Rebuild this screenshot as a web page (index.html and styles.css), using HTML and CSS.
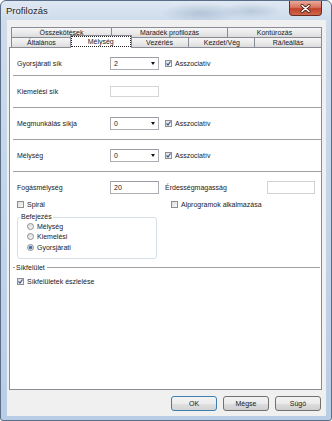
FILE: index.html
```html
<!DOCTYPE html>
<html lang="hu">

<head>
    <meta charset="UTF-8">
    <title>Profilozás</title>
    <link rel="stylesheet" href="styles.css">
</head>

<body>
    <div class="window">
        <!-- Címsor -->
        <div class="titlebar">
            <span class="title">Profilozás</span>
            <div class="close-button">
                <svg width="11" height="9" viewBox="0 0 11 9">
                    <path d="M2 1.5 L9 7.5 M9 1.5 L2 7.5" stroke="#4a1b14" stroke-width="3" stroke-linecap="round"/>
                    <path d="M2 1.5 L9 7.5 M9 1.5 L2 7.5" stroke="#fff" stroke-width="1.6" stroke-linecap="round"/>
                </svg>
            </div>
        </div>

        <div class="client">
            <!-- Fülek -->
            <div class="tabs">
                <div class="tab-row">
                    <div class="tab tab-osszekotesek">Összekötések</div>
                    <div class="tab tab-maradek">Maradék profilozás</div>
                    <div class="tab tab-konturozas">Kontúrozás</div>
                </div>
                <div class="tab-row">
                    <div class="tab tab-altalanos">Általános</div>
                    <div class="tab tab-melyseg active">Mélység</div>
                    <div class="tab tab-vezerles">Vezérlés</div>
                    <div class="tab tab-kezdet">Kezdet/Vég</div>
                    <div class="tab tab-raleallas">Rá/leállás</div>
                </div>
            </div>

            <div class="panel">
                <div class="row first">
                    <span class="label">Gyorsjárati sík</span>
                    <div class="combo"><span>2</span><span class="arrow"></span></div>
                    <div class="check"><span class="box checked"></span>Asszociatív</div>
                </div>

                <div class="row">
                    <span class="label">Kiemelési sík</span>
                    <div class="field disabled"></div>
                </div>

                <div class="row">
                    <span class="label">Megmunkálás síkja</span>
                    <div class="combo"><span>0</span><span class="arrow"></span></div>
                    <div class="check"><span class="box checked"></span>Asszociatív</div>
                </div>

                <div class="row">
                    <span class="label">Mélység</span>
                    <div class="combo"><span>0</span><span class="arrow"></span></div>
                    <div class="check"><span class="box checked"></span>Asszociatív</div>
                </div>

                <div class="form-row depth-row">
                    <span class="label">Fogásmélység</span>
                    <div class="field">20</div>
                    <span class="right-label">Érdességmagasság</span>
                    <div class="field small"></div>
                </div>

                <div class="form-row spiral-row">
                    <div class="check left-check"><span class="box"></span>Spirál</div>
                    <div class="check"><span class="box"></span>Alprogramok alkalmazása</div>
                </div>

                <fieldset class="group">
                    <legend>Befejezés</legend>
                    <div class="radio"><span class="dot"></span>Mélység</div>
                    <div class="radio"><span class="dot"></span>Kiemelési</div>
                    <div class="radio"><span class="dot selected"></span>Gyorsjárati</div>
                </fieldset>

                <div class="section-line">
                    <span class="dash"></span>
                    <span class="section-title">Síkfelület</span>
                    <span class="line"></span>
                </div>

                <div class="form-row plane-row">
                    <div class="check"><span class="box checked"></span>Síkfelületek észlelése</div>
                </div>
            </div>

            <!-- Gombok -->
            <div class="buttons">
                <button class="default">OK</button>
                <button>Mégse</button>
                <button>Súgó</button>
            </div>
        </div>
    </div>
</body>

</html>
```

FILE: styles.css
```css
body {
    margin: 0;
    font-family: "Liberation Sans", Arial, sans-serif;
    font-size: 7px;
    color: #1a1a1a;
    background-color: #ffffff;
}

.window {
    width: 332px;
    height: 421px;
    box-sizing: border-box;
    display: flex;
    flex-direction: column;
    border: 1px solid #5a6e88;
    border-radius: 6px 6px 3px 3px;
    overflow: hidden;
    background:
        radial-gradient(ellipse 40px 10px at 200px 12px, rgba(120, 145, 175, 0.35), transparent),
        radial-gradient(ellipse 30px 8px at 250px 10px, rgba(120, 145, 175, 0.3), transparent),
        linear-gradient(to bottom, #dfe8f3 0px, #cddbeb 20px, #b9cde6 100%);
}

.titlebar {
    height: 19px;
    display: flex;
    align-items: flex-start;
    justify-content: space-between;
    padding-left: 5px;
}

.title {
    line-height: 19px;
    font-size: 9.5px;
    color: #1e1e1e;
    text-shadow: 0 0 4px #ffffff;
}

.close-button {
    width: 33px;
    height: 15px;
    margin-right: 9px;
    box-sizing: border-box;
    border: 1px solid #6b2a20;
    border-top: none;
    border-radius: 0 0 4px 4px;
    background: linear-gradient(to bottom, #e9a99b 0%, #d7755f 45%, #c0422a 55%, #d0674b 100%);
    display: flex;
    align-items: center;
    justify-content: center;
}

.client {
    flex: 1;
    margin: 0 5px 4px 6px;
    padding: 7px 4px 0 2px;
    background-color: #f0f0f0;
    display: flex;
    flex-direction: column;
}

/* Fülek */
.tabs {
    margin-left: 2px;
}

.tab-row {
    display: flex;
    height: 10px;
    align-items: flex-start;
}

.tab {
    box-sizing: border-box;
    height: 10px;
    line-height: 9px;
    text-align: center;
    border: 1px solid #898c95;
    border-bottom: none;
    margin-left: -1px;
    background: linear-gradient(to bottom, #f6f6f6, #ebebeb 50%, #dcdcdc);
    white-space: nowrap;
}

.tab:first-child {
    margin-left: 0;
}

.tab-osszekotesek { width: 101px; }
.tab-maradek { width: 117px; }
.tab-konturozas { width: 95px; }
.tab-altalanos { width: 61px; }
.tab-melyseg { width: 59px; }
.tab-vezerles { width: 60px; }
.tab-kezdet { width: 67px; }
.tab-raleallas { width: 68px; }

.tab.active {
    position: relative;
    z-index: 1;
    width: 62px;
    height: 13px;
    margin: -2px -2px 0 -2px;
    line-height: 11px;
    background: #ffffff;
    outline: 1px dotted #222;
    outline-offset: -2px;
}

.tab.active + .tab {
    margin-left: 0;
}

/* Panel */
.panel {
    flex: 1;
    box-sizing: border-box;
    background-color: #ffffff;
    border: 1px solid #898c95;
}

.row {
    display: flex;
    align-items: center;
    height: 31px;
    margin: 0 0 0 3px;
    padding-left: 4px;
    border-bottom: 1px solid #a0a0a0;
}

.row.first {
    height: 23px;
    padding-top: 4px;
}

.label {
    width: 93px;
    flex-shrink: 0;
}

.combo,
.field {
    box-sizing: border-box;
    width: 49px;
    height: 13px;
    border: 1px solid #abadb3;
    border-top-color: #9a9da4;
    background: #ffffff;
    display: flex;
    align-items: center;
    justify-content: space-between;
    padding: 0 3px;
}

.field.disabled {
    height: 11px;
    border-color: #d5d5d5;
}

.field.small {
    width: 48px;
    border-color: #d0d2d6;
}

.arrow {
    width: 0;
    height: 0;
    border-left: 2.5px solid transparent;
    border-right: 2.5px solid transparent;
    border-top: 3px solid #111;
}

.check {
    display: flex;
    align-items: center;
    gap: 3px;
    margin-left: 6px;
}

.box {
    box-sizing: border-box;
    width: 7px;
    height: 7px;
    border: 1px solid #8e8f8f;
    background: linear-gradient(135deg, #dcdcdc, #fafafa);
}

.box.checked {
    background:
        url("data:image/svg+xml,%3Csvg xmlns='http://www.w3.org/2000/svg' width='5' height='5'%3E%3Cpath d='M0.5 2.5 L2 4 L4.5 0.5' fill='none' stroke='%233b5a9a' stroke-width='1.2'/%3E%3C/svg%3E") center / 5px 5px no-repeat,
        linear-gradient(135deg, #dcdcdc, #fafafa);
}

.form-row {
    display: flex;
    align-items: center;
    padding-left: 7px;
}

.depth-row {
    margin-top: 9px;
    height: 13px;
}

.right-label {
    flex: 1;
    margin-left: 6px;
}

.depth-row .field.small {
    margin-right: 6px;
}

.spiral-row {
    margin-top: 5px;
    height: 10px;
}

.left-check {
    width: 148px;
    margin-left: 0;
}

/* Befejezés csoport */
.group {
    box-sizing: border-box;
    width: 140px;
    margin: 4px 0 0 7px;
    padding: 0 0 5px 2px;
    border: 1px solid #d5dfe5;
    border-radius: 3px;
}

.group legend {
    padding: 0 1px;
    line-height: 8px;
}

.radio {
    display: flex;
    align-items: center;
    gap: 3px;
    height: 10.5px;
    padding-left: 7px;
}

.dot {
    box-sizing: border-box;
    width: 7px;
    height: 7px;
    border: 1px solid #8e8f8f;
    border-radius: 50%;
    background: linear-gradient(135deg, #d8d8d8, #fafafa);
}

.dot.selected {
    background: radial-gradient(circle, #2f5f9f 0, #5d8bc6 1.6px, #e8e8e8 2.2px);
}

.section-line {
    display: flex;
    align-items: center;
    height: 9px;
    margin-top: 4px;
    padding-left: 3px;
    padding-right: 1px;
}

.dash {
    width: 2px;
    border-top: 1px solid #a0a0a0;
}

.section-title {
    padding: 0 2px 0 1px;
}

.line {
    flex: 1;
    border-top: 1px solid #a0a0a0;
}

.plane-row {
    margin-top: 5px;
    height: 10px;
}

.plane-row .check {
    margin-left: 0;
}

/* Gombok */
.buttons {
    display: flex;
    justify-content: flex-end;
    gap: 6px;
    height: 26px;
    padding-top: 6px;
    box-sizing: border-box;
    margin-right: 1px;
}

button {
    box-sizing: border-box;
    width: 46px;
    height: 15px;
    padding: 0;
    font-family: "Liberation Sans", Arial, sans-serif;
    font-size: 7px;
    color: #1a1a1a;
    border: 1px solid #707070;
    border-radius: 3px;
    background: linear-gradient(to bottom, #f2f2f2 0%, #ebebeb 50%, #dddddd 51%, #cfcfcf 100%);
}

button.default {
    border-color: #3c7fb1;
    background: linear-gradient(to bottom, #eaf6fd 0%, #d9f0fc 50%, #bee6fd 51%, #a7d9f5 100%);
    background: linear-gradient(to bottom, #f4f4f4 0%, #ececec 50%, #e0e0e0 51%, #d4d4d4 100%);
}
```
